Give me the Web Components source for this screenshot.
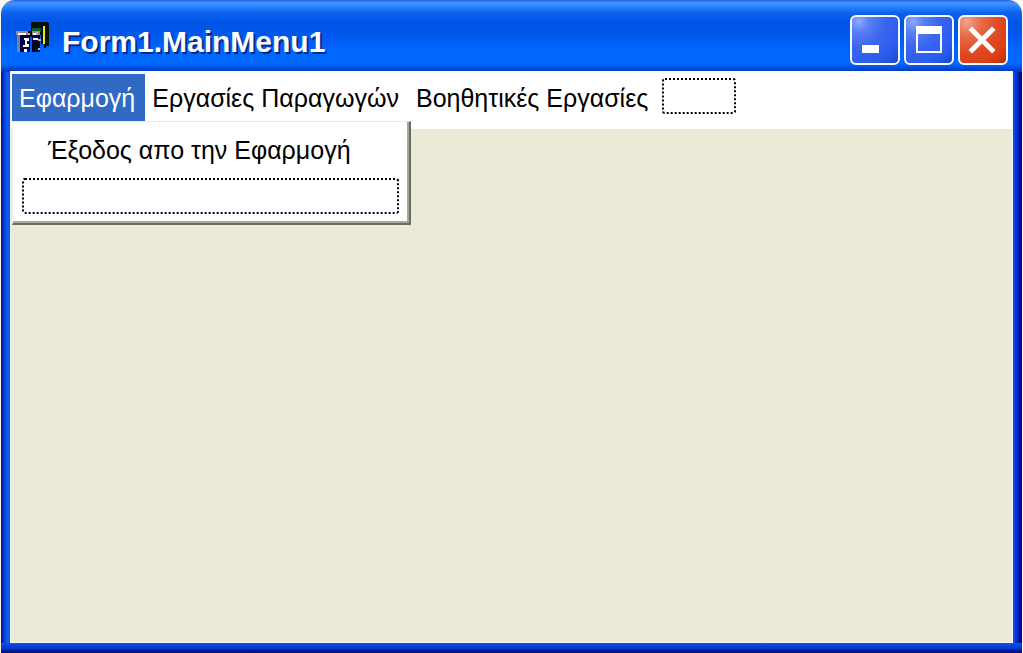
<!DOCTYPE html>
<html lang="el">
<head>
<meta charset="utf-8">
<title>Form1.MainMenu1</title>
<style>
html, body { height: 100%; }
body { margin: 0; background: #fbf8ea; font-family: "Liberation Sans", Arial, sans-serif; }
</style>
</head>
<body>
<xp-window>
  <title-bar slot="title">Form1.MainMenu1</title-bar>
  <menu-bar slot="menu">
    <menu-item active>Εφαρμογή
      <menu-popup slot="popup">
        <popup-item>Έξοδος απο την Εφαρμογή</popup-item>
        <menu-placeholder></menu-placeholder>
      </menu-popup>
    </menu-item>
    <menu-item>Εργασίες Παραγωγών</menu-item>
    <menu-item>Βοηθητικές Εργασίες</menu-item>
    <menu-placeholder inline></menu-placeholder>
  </menu-bar>
</xp-window>
<script>
function define(name, html) {
  const template = document.createElement('template');
  template.innerHTML = html;
  customElements.define(name, class extends HTMLElement {
    constructor() {
      super();
      this.attachShadow({ mode: 'open' }).append(template.content.cloneNode(true));
    }
  });
}

define('xp-window', `
<style>
:host { display: flex; flex-direction: column; box-sizing: border-box; min-height: 100vh; padding: 0 10px 10px;
  margin: 0 1px; border-radius: 14px 14px 0 0; overflow: hidden;
  background:
    linear-gradient(to bottom, #2a62e8 0, #3f98ff 3px, #2a80fb 7px, #0a62f0 13px, #0054e3 22px, #0058ee 36px, #0066fe 50px, #0069ff 64px, #0046d4 69px, #0038b8 72px) top / 100% 72px no-repeat,
    linear-gradient(to bottom, #1058e0, #0640dc 3px, #0236d0 6px, #001a96 7px, #00107e) bottom / 100% 10px no-repeat,
    linear-gradient(to right, #0010a0, #001ca8 1px, #0a48e0 4px, #1060f4 7px, #1050cc 9px) left / 9px 100% no-repeat,
    linear-gradient(to left, #000878, #00109c 3px, #0030d4 5px, #0748ec 8px, #1258e0 10px) right / 10px 100% no-repeat,
    #0048e0; }
main { flex: 1; display: flex; flex-direction: column; background: #ebe9d8;
  border: 1px solid #f2f3ee; border-top-color: #fff; margin: 0 -1px; }
.space { flex: 1; }
</style>
<slot name="title"></slot>
<main><slot name="menu"></slot><div class="space"><slot></slot></div></main>`);

define('title-bar', `
<style>
:host { display: flex; align-items: center; box-sizing: border-box; height: 71px; padding: 8px 4px 0 5px; gap: 12px; }
.icon { width: 34px; height: 32px; flex: none; margin-bottom: 6px; }
h1 { flex: 1; margin: 0; padding-top: 4px; font-size: 30px; line-height: 36px; font-weight: bold; color: #fff; text-shadow: 2px 2px 0 #062a8c; white-space: nowrap; }
nav { display: flex; gap: 4px; }
</style>
<svg class="icon" viewBox="0 0 34 32" shape-rendering="crispEdges" aria-hidden="true">
  <path fill="#071008" d="M15 1h17l1 2v22h-3v2h-2v-4h-3v-9H15z"/>
  <path fill="#0b5b2c" d="M16 7h9v4h-9z"/>
  <path fill="#e8f000" d="M27 5h2v18h-2z"/>
  <path fill="#8c8c94" d="M0 10h24v4H0z"/>
  <path fill="#fff" d="M2 12h8v2H2zM17 12h3v2h-3z"/>
  <path fill="#80808c" d="M1 14h3v17H1z"/>
  <path fill="#02004a" d="M4 14h10v17H4zM16 14h8v17h-8z"/>
  <path fill="#080810" d="M12 10h4v6h-4zM18 20h5v9h-5z"/>
  <path fill="#fff" d="M8 17h5v3h-2v3h2v3H7v-2h2v-5H8zM8 28h3v3H8zM17 17h5v2h-5z"/>
  <path fill="#c8b898" d="M12 12h2v2h-2zM20 11h2v3h-2zM22 18h3v2h-3zM22 27h2v2h-2z"/>
</svg>
<h1><slot></slot></h1>
<nav>
  <window-button kind="minimize"></window-button>
  <window-button kind="maximize"></window-button>
  <window-button kind="close"></window-button>
</nav>`);

const glyphs = {
  minimize: ['Minimize', '<path fill="#fff" d="M12 30h17v8H12z"/>'],
  maximize: ['Maximize', '<path fill="#fff" fill-rule="evenodd" d="M12 11h26v27H12zM14 19v17h22V19z"/>'],
  close: ['Close', '<path stroke="#fff" stroke-width="5" stroke-linecap="square" d="M14 15l20 20M34 15L14 35"/>']
};
customElements.define('window-button', class extends HTMLElement {
  constructor() {
    super();
    const [label, shape] = glyphs[this.getAttribute('kind')];
    this.attachShadow({ mode: 'open' }).innerHTML = `
<style>
:host { display: block; }
button { display: block; box-sizing: border-box; width: 50px; height: 50px; padding: 0; border: 2px solid #f4f8ff; border-radius: 6px;
  background: radial-gradient(circle at 15% 10%, #8fabff 0, #5a80f4 18%, #3a66ee 45%, #2c5cf0 75%, #1a48c8 100%); }
:host([kind=close]) button { background: radial-gradient(circle at 15% 10%, #f0a590 0, #e66b4a 25%, #e04a24 55%, #dc3e12 80%, #b03008 100%); }
svg { display: block; margin: -2px; width: 50px; height: 50px; }
</style>
<button type="button" aria-label="${label}"><svg viewBox="0 0 50 50">${shape}</svg></button>`;
  }
});

define('menu-bar', `
<style>
:host { display: flex; align-items: flex-start; box-sizing: border-box; min-height: 57px; padding: 2px 1px 8px; background: #fff; border-bottom: 1px solid #ece6de; }
</style>
<slot></slot>`);

define('menu-item', `
<style>
:host { display: block; position: relative; }
button { display: block; height: 47px; padding: 0 10px 0 7px; border: 0; background: none; color: #000; font: 25px/48px "Liberation Sans", Arial, sans-serif; white-space: nowrap; }
:host([active]) button { background: #316ac5; color: #fff; }
.popup { position: absolute; top: 100%; left: 0; z-index: 1; }
</style>
<button type="button"><slot></slot></button>
<div class="popup"><slot name="popup"></slot></div>`);

define('menu-popup', `
<style>
:host { display: block; box-sizing: border-box; width: 399px; padding: 4px 10px 9px 9px; background: #fff; border: solid; border-width: 1px 2px 2px 1px; border-color: #ece9e0 #6c6b62 #6c6b62 #f4f2ea; box-shadow: inset -2px -2px #a9a899; }
</style>
<slot></slot>`);

define('popup-item', `
<style>
:host { display: block; }
button { display: flex; width: 100%; height: 52px; padding: 0 0 0 26px; border: 0; background: none; color: #000; text-align: left; font: 25px/48px "Liberation Sans", Arial, sans-serif; white-space: nowrap; }
</style>
<button type="button"><slot></slot></button>`);

define('menu-placeholder', `
<style>
:host { display: block; }
:host([inline]) { width: 74px; margin: 4px 0 0 4px; }
button { display: block; box-sizing: border-box; width: 100%; height: 36px; border: 2px dotted #000; border-radius: 3px; background: #fff; }
</style>
<button type="button" aria-label="New menu item"></button>`);
</script>
</body>
</html>
